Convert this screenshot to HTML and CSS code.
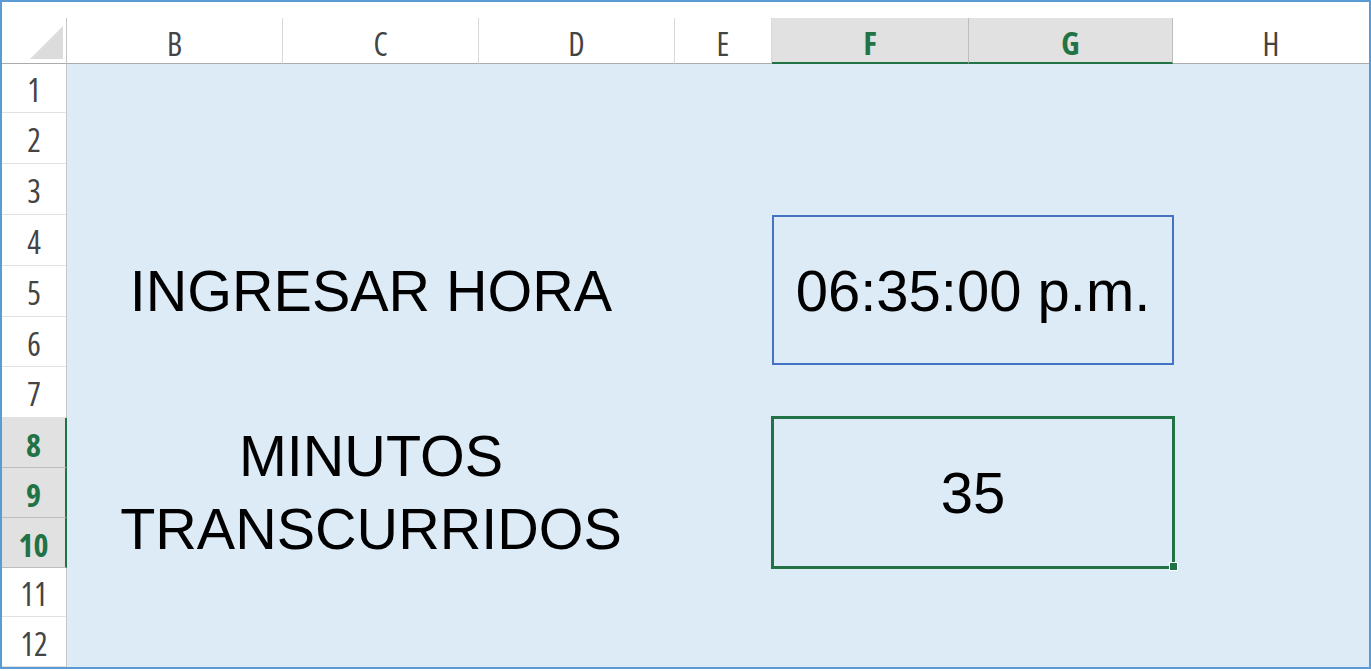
FILE: index.html
```html
<!DOCTYPE html>
<html lang="es">
<head>
<meta charset="utf-8">
<title>Hoja de cálculo</title>
<link rel="stylesheet" href="styles.css">
</head>
<body>
<div class="frame">
  <div class="topstrip"></div>
  <div class="colbar">
    <div class="corner">
      <svg class="corner-tri" width="33" height="33" viewBox="0 0 33 33"><polygon points="33,0 33,33 0,33" fill="#dcdcdc"/></svg>
    </div>
    <div class="colhdr">B</div>
    <div class="colhdr">C</div>
    <div class="colhdr">D</div>
    <div class="colhdr">E</div>
    <div class="colhdr sel">F</div>
    <div class="colhdr sel">G</div>
    <div class="colhdr last">H</div>
  </div>
  <div class="main">
    <div class="rowbar">
      <div class="rowhdr">1</div>
      <div class="rowhdr">2</div>
      <div class="rowhdr">3</div>
      <div class="rowhdr">4</div>
      <div class="rowhdr">5</div>
      <div class="rowhdr">6</div>
      <div class="rowhdr">7</div>
      <div class="rowhdr sel">8</div>
      <div class="rowhdr sel">9</div>
      <div class="rowhdr sel">10</div>
      <div class="rowhdr">11</div>
      <div class="rowhdr">12</div>
    </div>
    <div class="cells">
      <div class="label label-hora">INGRESAR HORA</div>
      <div class="box box-hora">06:35:00 p.m.</div>
      <div class="label label-min">MINUTOS TRANSCURRIDOS</div>
      <div class="box box-min">35<span class="handle"></span></div>
    </div>
  </div>
</div>
</body>
</html>
```
FILE: styles.css
```css
:root {
  --rows: 49px 51px 51px 51px 51px 50px 51px 50px 50px 50px 49px 50px;
  --green: #217346;
}
* { box-sizing: border-box; margin: 0; padding: 0; }
html, body { background: #fff; }
body {
  margin: 0;
  width: 1371px;
  height: 671px;
  overflow: hidden;
}
.frame {
  width: 1371px;
  height: 669px;
  border: 2px solid #5b9bd5;
  display: flex;
  flex-direction: column;
  background: #fff;
  overflow: hidden;
}
.topstrip { height: 16px; flex: none; background: #fff; }

.colbar {
  display: grid;
  grid-template-columns: 65px 216px 196px 196px 97px 197px 204px 1fr;
  height: 46px;
  flex: none;
}
.corner {
  border-right: 1px solid #c6c6c6;
  border-bottom: 1px solid #ababab;
  display: flex;
  justify-content: flex-end;
  align-items: flex-end;
  padding: 0 3px 4px 0;
}
.corner-tri { display: block; }
.colhdr, .rowhdr {
  font-family: "Open Sans", "Noto Sans", sans-serif;
  font-stretch: 87%;
  font-size: 32px;
  color: #444;
  display: flex;
  align-items: center;
  justify-content: center;
  line-height: 1;
}
.colhdr {
  border-right: 1px solid #d9d9d9;
  border-bottom: 1px solid #ababab;
  padding-top: 6px;
}
.colhdr.last { border-right: none; }
.colhdr.sel {
  background: #e1e1e1;
  border-right-color: #bdbdbd;
  border-bottom: 2px solid var(--green);
  color: var(--green);
  font-weight: 700;
}

.main {
  display: grid;
  grid-template-columns: 65px 1fr;
  flex: 1;
}
.rowbar {
  display: grid;
  grid-template-rows: var(--rows);
  border-right: 1px solid #c6c6c6;
}
.rowhdr {
  border-bottom: 1px solid #e1e1e1;
  padding-top: 4px;
}
.rowhdr.sel {
  background: #e1e1e1;
  border-bottom-color: #bdbdbd;
  color: var(--green);
  font-weight: 700;
  margin-right: -1px;
  border-right: 2px solid var(--green);
}

.cells {
  display: grid;
  grid-template-columns: 216px 196px 196px 97px 197px 204px 1fr;
  grid-template-rows: var(--rows);
  background: #ddebf7;
}
.label, .box {
  font-family: "Liberation Sans", Arial, sans-serif;
  font-size: 57.5px;
  color: #000;
  display: flex;
  align-items: center;
  justify-content: center;
  text-align: center;
}
.box { font-size: 58px; }
.label-hora { grid-row: 4 / 7; grid-column: 1 / 4; }
.label-min { grid-row: 8 / 11; grid-column: 1 / 4; line-height: 73px; padding: 0 20px; }
.box-hora {
  grid-row: 4 / 7;
  grid-column: 5 / 7;
  border: 2px solid #4472c4;
  margin: 0 -1px 2px 0;
}
.box-min {
  grid-row: 8 / 11;
  grid-column: 5 / 7;
  border: 3px solid var(--green);
  margin: -2px -2px -1px -1px;
  position: relative;
}
.handle {
  position: absolute;
  right: -6px;
  bottom: -5px;
  width: 9px;
  height: 9px;
  background: var(--green);
  border: 1px solid #fff;
}
```
